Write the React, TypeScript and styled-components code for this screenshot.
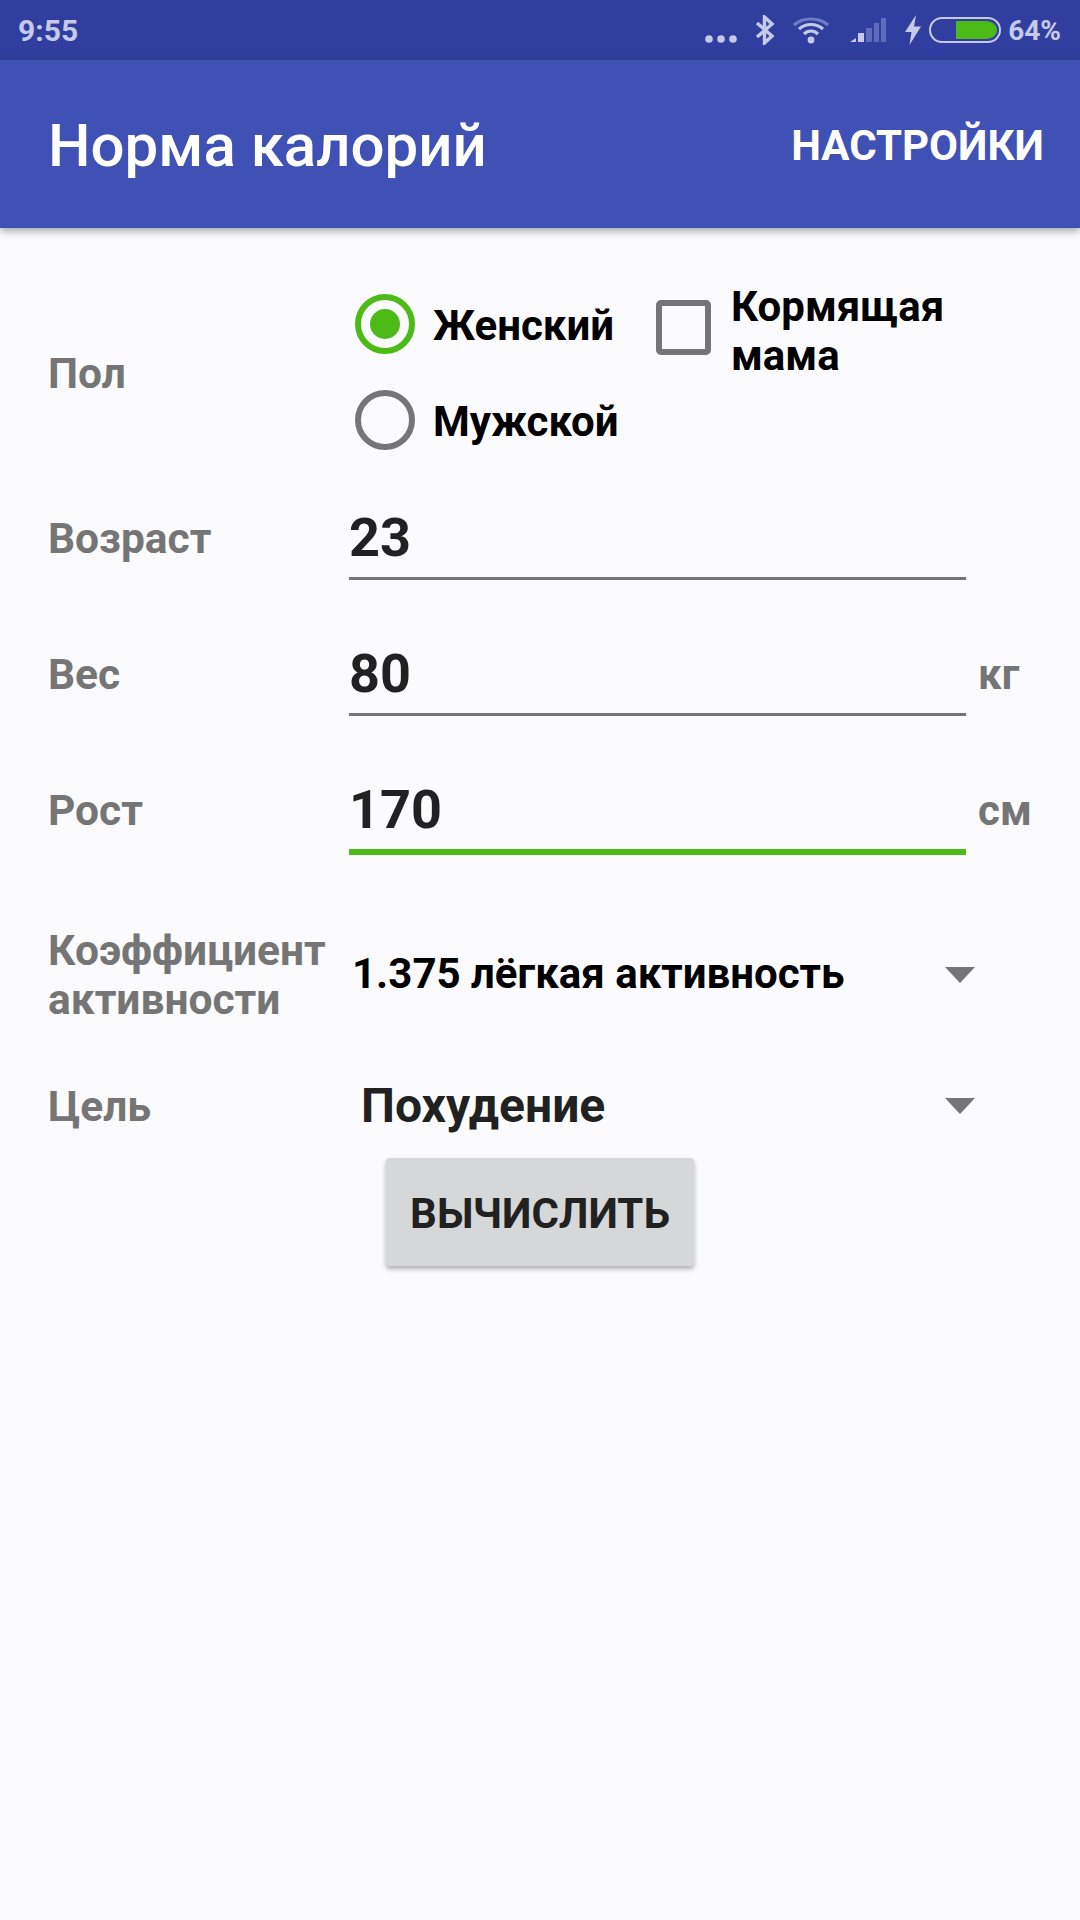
import React from 'react';
import styled, { createGlobalStyle } from 'styled-components';

const Global = createGlobalStyle`
html, body {
    margin: 0;
    padding: 0;
    background: #fbfafc;
}
* {
    box-sizing: border-box;
}
`

const Screen = styled.div`
width: 1080px;
height: 1920px;
background: #fbfafc;
font-family: Roboto, 'Noto Sans', sans-serif;
overflow: hidden;
`
const StatusBar = styled.div`
height: 60px;
background: #303f9f;
display: flex;
align-items: center;
padding: 0 19px 0 18px;
color: #c5cae9;
font-size: 28px;
font-weight: 700;
`
const Clock = styled.span`
font-size: 30px;
`
const StatusIcons = styled.div`
margin-left: auto;
display: flex;
align-items: center;
`
const Percent = styled.span`
margin-left: 7px;
`
const Toolbar = styled.div`
height: 168px;
background: #3f51b5;
display: flex;
align-items: center;
justify-content: space-between;
padding: 0 36px 0 48px;
color: #fff;
box-shadow: 0 3px 8px rgba(0, 0, 0, 0.35);
position: relative;
`
const Title = styled.div`
font-size: 60px;
font-weight: 500;
margin-top: 2px;
`
const Action = styled.div`
font-size: 42px;
font-weight: 700;
margin-top: 3px;
`
const Form = styled.div`
padding: 48px 0 0 48px;
`
const Row = styled.div<{ $height: number }>`
display: flex;
align-items: center;
height: ${props => props.$height}px;
`
const Label = styled.div`
width: 301px;
flex-shrink: 0;
color: #757575;
font-size: 42.5px;
font-weight: 700;
line-height: 49px;
`
const Choices = styled.div`
display: flex;
flex-direction: column;
gap: 36px;
margin: -3px 0 0 6px;
`
const ChoiceRow = styled.div`
display: flex;
align-items: center;
height: 60px;
`
const Radio = styled.div<{ $on?: boolean }>`
width: 60px;
height: 60px;
border-radius: 50%;
border: 6px solid ${props => props.$on ? '#4cbb17' : '#757575'};
display: flex;
align-items: center;
justify-content: center;
flex-shrink: 0;
&::after {
    content: '';
    display: ${props => props.$on ? 'block' : 'none'};
    width: 30px;
    height: 30px;
    border-radius: 50%;
    background: #4cbb17;
}
`
const ChoiceText = styled.div<{ $shift?: boolean }>`
color: #000;
font-size: 42px;
font-weight: 700;
line-height: 49px;
margin: ${props => props.$shift ? '14px 0 0 20px' : '4px 0 0 18px'};
`
const Checkbox = styled.div`
width: 55px;
height: 55px;
border: 6px solid #757575;
border-radius: 5px;
margin: 7px 0 0 42px;
flex-shrink: 0;
`
const Field = styled.div<{ $active?: boolean }>`
width: 617px;
height: 90px;
padding-top: ${props => props.$active ? 4 : 8}px;
display: flex;
align-items: center;
color: #212121;
font-size: 54px;
font-weight: 700;
border-bottom: ${props => props.$active ? '6px solid #4cbb17' : '3px solid #757575'};
margin-bottom: ${props => props.$active ? 0 : 6}px;
`
const Unit = styled.div`
color: #757575;
font-size: 42px;
font-weight: 700;
margin-left: 12px;
`
const Select = styled.div`
width: 626px;
display: flex;
align-items: center;
justify-content: space-between;
`
const SelectText = styled.div<{ $large?: boolean }>`
color: ${props => props.$large ? '#212121' : '#000'};
font-size: ${props => props.$large ? 48 : 42}px;
font-weight: 700;
margin: ${props => props.$large ? '-2px 0 0 12px' : '-4px 0 0 3px'};
`
const Arrow = styled.div`
width: 0;
height: 0;
border-left: 15px solid transparent;
border-right: 15px solid transparent;
border-top: 16px solid #757575;
`
const ButtonRow = styled.div`
display: flex;
padding-left: 338px;
margin-top: 18px;
`
const Button = styled.div`
width: 308px;
height: 108px;
padding-top: 2px;
background: #d6d7d8;
border-radius: 4px;
box-shadow: 0 3px 5px rgba(0, 0, 0, 0.3);
display: flex;
align-items: center;
justify-content: center;
color: #212121;
font-size: 42px;
font-weight: 700;
`

const Dots = () => (
    <svg width="32" height="8" viewBox="0 0 32 8" style={{ marginTop: 18 }}>
        <circle cx="4" cy="4" r="3.8" fill="#c5cae9" />
        <circle cx="16" cy="4" r="3.8" fill="#c5cae9" />
        <circle cx="28" cy="4" r="3.8" fill="#c5cae9" />
    </svg>
)

const Bluetooth = () => (
    <svg width="20" height="30" viewBox="0 0 20 30" style={{ marginLeft: 18 }}>
        <path d="M2 8 L17 21 L9.5 28 V2 L17 9 L2 22" fill="none" stroke="#c5cae9" strokeWidth="3.4" />
    </svg>
)

const Wifi = () => (
    <svg width="36" height="27" viewBox="0 0 36 27" style={{ marginLeft: 18 }}>
        <path d="M1 8 C10 0 26 0 35 8" fill="none" stroke="#6f7cc4" strokeWidth="3.2" />
        <path d="M6 12 C13 6 23 6 30 12" fill="none" stroke="#c5cae9" strokeWidth="3.2" />
        <path d="M11 17 C15 13 21 13 25 17" fill="none" stroke="#c5cae9" strokeWidth="3.2" />
        <circle cx="18" cy="23" r="3.4" fill="#c5cae9" />
    </svg>
)

const Signal = () => (
    <svg width="37" height="26" viewBox="0 0 37 26" style={{ marginLeft: 21 }}>
        <path d="M0 25 L6 21 V25 Z" fill="#c5cae9" />
        <rect x="8" y="16" width="6" height="9" fill="#c5cae9" />
        <rect x="16" y="11" width="6" height="14" fill="#5f6db9" />
        <rect x="24" y="6" width="5" height="19" fill="#5f6db9" />
        <rect x="31" y="1" width="5" height="24" fill="#5f6db9" />
    </svg>
)

const Bolt = () => (
    <svg width="16" height="30" viewBox="0 0 16 30" style={{ marginLeft: 18 }}>
        <path d="M11 0 L0 17 H6.5 L4.5 30 L16 11.5 H9 Z" fill="#c5cae9" />
    </svg>
)

const Battery = () => (
    <svg width="72" height="26" viewBox="0 0 72 26" style={{ marginLeft: 8 }}>
        <rect x="1" y="1" width="70" height="24" rx="12" fill="none" stroke="#c5cae9" strokeWidth="2" />
        <path d="M27 4 H57 C63 4 68 8 68 13 C68 18 63 22 57 22 H27 Z" fill="#4cbb17" />
    </svg>
)

const App: React.FC = () => {
    return (
        <Screen>
            <Global />
            <StatusBar>
                <Clock>9:55</Clock>
                <StatusIcons>
                    <Dots />
                    <Bluetooth />
                    <Wifi />
                    <Signal />
                    <Bolt />
                    <Battery />
                    <Percent>64%</Percent>
                </StatusIcons>
            </StatusBar>
            <Toolbar>
                <Title>Норма калорий</Title>
                <Action>НАСТРОЙКИ</Action>
            </Toolbar>
            <Form>
                <Row $height={194}>
                    <Label>Пол</Label>
                    <Choices>
                        <ChoiceRow>
                            <Radio $on />
                            <ChoiceText>Женский</ChoiceText>
                            <Checkbox />
                            <ChoiceText $shift>Кормящая<br />мама</ChoiceText>
                        </ChoiceRow>
                        <ChoiceRow>
                            <Radio />
                            <ChoiceText>Мужской</ChoiceText>
                        </ChoiceRow>
                    </Choices>
                </Row>
                <Row $height={136}>
                    <Label>Возраст</Label>
                    <Field>23</Field>
                </Row>
                <Row $height={136}>
                    <Label>Вес</Label>
                    <Field>80</Field>
                    <Unit>кг</Unit>
                </Row>
                <Row $height={136}>
                    <Label>Рост</Label>
                    <Field $active>170</Field>
                    <Unit>см</Unit>
                </Row>
                <Row $height={194}>
                    <Label>Коэффициент<br />активности</Label>
                    <Select>
                        <SelectText>1.375 лёгкая активность</SelectText>
                        <Arrow />
                    </Select>
                </Row>
                <Row $height={68}>
                    <Label>Цель</Label>
                    <Select>
                        <SelectText $large>Похудение</SelectText>
                        <Arrow />
                    </Select>
                </Row>
                <ButtonRow>
                    <Button>ВЫЧИСЛИТЬ</Button>
                </ButtonRow>
            </Form>
        </Screen>
    )
}

export default App;
